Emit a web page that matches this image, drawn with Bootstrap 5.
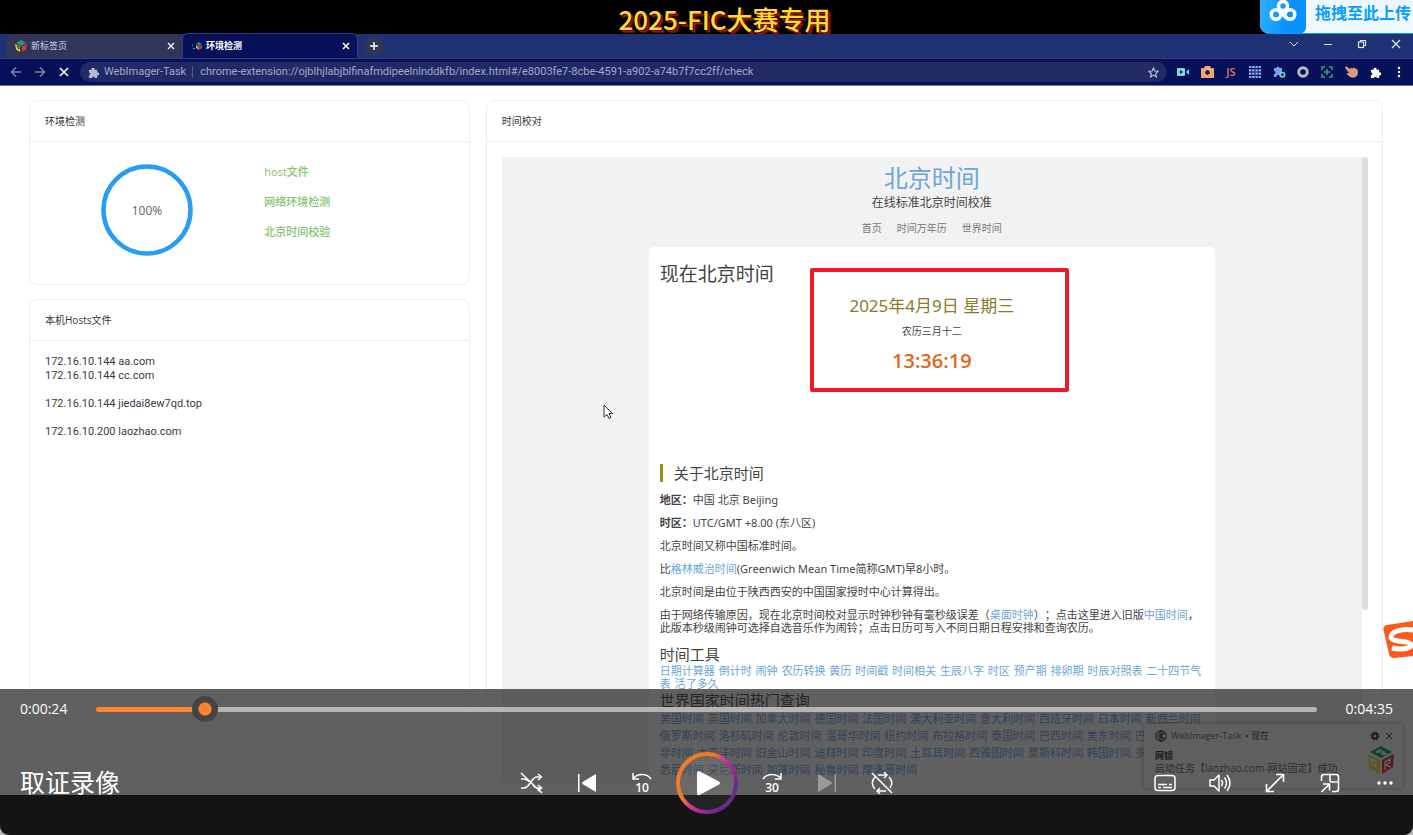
<!DOCTYPE html>
<html lang="zh-CN">
<head>
<meta charset="utf-8">
<meta name="viewport" content="width=device-width, initial-scale=1">
<title>取证录像</title>
<link href="https://cdn.jsdelivr.net/npm/bootstrap@5.3.0/dist/css/bootstrap.min.css" rel="stylesheet">
<style>
body{background:#b5b5b5;font-family:"Open Sans","Noto Sans CJK SC",sans-serif;font-size:11px;line-height:14px;color:#333}
a{text-decoration:none}
button{border:0;background:none;padding:0;color:inherit}
svg{display:block;flex:none}
h1,h2,h3,p,ul{margin:0}
.player{min-height:100vh;background:#141414;border-radius:0 0 9px 9px}
.caption-bar{height:34px;background:#000;padding-left:36px}
.caption-bar h1{font:500 26px/38px "Noto Sans CJK SC",sans-serif;color:#ffdc32;text-shadow:1px 1px 0 #5a0a00,2px 2px 0 #a01408,3px 3px 1px #6a0c04}
.upload{top:0;right:0;height:34px;background:#f0f8ff;border-bottom:1px solid #0a9bff;border-radius:0 0 0 9px;color:#06a0ff;font:700 16px/24px "Noto Sans CJK SC",sans-serif;z-index:3;overflow:hidden}
.upload span{padding:0 2px 0 9px}
.upload-logo{width:46px;height:34px;background:linear-gradient(100deg,#2fb0ff,#0792ff 60%);border-radius:0 0 7px 9px}
/* browser chrome */
.tabs{height:25px;background:#1d3173;padding-left:6px;border-bottom:1px solid #2c3f7c}
.tab{width:176px;height:24px;background:#313558;color:#d6d8e4;border-radius:6px 6px 0 0;font-size:9px;padding:0 7px 0 9px}
.tab.current{background:#07115a;color:#fff;font-weight:600;height:25px;border:1px solid #2c3f7c;border-bottom:0}
.plus{width:20px;height:20px;border-radius:50%;background:#313558;color:#fff;place-items:center;margin-left:6px}
.winctl{width:34px;height:20px;color:#dfe3f2}
.toolbar{height:27px;background:#07115a;border-bottom:1px solid #6d73a3;color:#fff;padding-right:2px}
.navbtn{width:24px;height:24px}
.address{height:20px;border-radius:10px;background:#222a66;color:#a3a8ca;font:11px/20px Roboto,sans-serif}
.address .host{border-right:1px solid #555c8c;line-height:12px;padding:0 6px 0 1px}
.address .url{padding-left:7px}
.ext{width:24px;height:24px}
.js{color:#f0706c;font:600 11px/14px "Open Sans",sans-serif}
/* page */
.page{background:#fff;margin-bottom:40px;padding:14px 30px 12px 29px}
.panel{border:1px solid #eee;border-radius:8px;background:#fff}
.panel.env{margin-bottom:14px}
.panel-head{height:41px;border-bottom:1px solid #eee;padding:0 15px;font:10px/41px "Open Sans","Noto Sans CJK SC",sans-serif;color:#333}
.checks{padding:15px 15px 28px}
.checks li{font-weight:500;color:#83c46c;line-height:30px;padding-left:15px}
.ring{margin-top:7px}
.hosts{padding:14px 15px;font:11px/14px Roboto,sans-serif;color:#3a3a44;margin:0;overflow:hidden}
.frame-wrap{padding:15px 14px 0 15px}
.frame{background:#f2f2f2;padding-top:4px}
.thumb{width:6px;height:453px;border-radius:3px;background:#ddd}
.site-title{font-size:24px;line-height:34px;color:#6aa5e0}
.site-sub{font-size:12px;line-height:15px;color:#444}
.site-nav{font-size:10px;line-height:16px;margin:10px 0 11px;gap:15px}
.site-nav a{color:#777}
.sheet{width:566px;max-width:100%;border-radius:5px 5px 0 0;background:#fff;padding:15px 11px 0;font-family:"Noto Sans","Noto Sans CJK SC",sans-serif;color:#444;text-spacing-trim:space-all}
.sheet h2{font-size:19px;line-height:24px;font-weight:400}
.date{font-size:17px;line-height:24px;margin-top:8px;color:#8a7a2c}
.lunar{font-size:10px;line-height:14px;margin-top:6px}
.clock{font:600 20px/26px "Open Sans",sans-serif;margin-top:10px;color:#e8661a}
.mark-box{left:161px;top:21px;width:259px;height:124px;border:4px solid #ee1b24;border-radius:2px}
.sheet h3{font-size:15px;font-weight:400;line-height:20px}
.sheet h3.about{margin:90px 0 11px;line-height:18px;border-left:3px solid #8f9413;padding-left:11px}
.sheet p{line-height:13px;margin-bottom:10px}
.sheet a{color:#6aa5dc}
.taglist{line-height:13px;white-space:nowrap}
.taglist.loose{line-height:17px}
.taglist a{margin-right:1px}
.pointer{left:603px;top:404px}
/* desktop toast */
.toast-box{right:10px;bottom:47px;width:259px;height:64px;background:#fbfbfb;box-shadow:0 0 4px #0005;font-size:9px;line-height:12px;padding:6px 9px 0 11px}
.toast-box .app{color:#666}
.toast-box .msg{color:#666;white-space:nowrap;font-size:10px}
.sogou{right:0;top:620px}
/* player controls */
.controls{left:0;right:0;bottom:0;background:rgba(20,20,20,.68);border-radius:0 0 9px 9px;padding:7px 0 21px;color:#fff}
.seek{height:26px;padding:0 20px;font-size:14px;gap:29px}
.seek input{appearance:none;-webkit-appearance:none;background:none;height:26px;margin:0;min-width:0}
.seek input::-webkit-slider-runnable-track{height:5px;border-radius:3px;background:linear-gradient(90deg,#ff8230 calc(8% + 11px),#b5b5b5 0)}
.seek input::-webkit-slider-thumb{-webkit-appearance:none;width:26px;height:26px;margin-top:-11px;border-radius:50%;background:radial-gradient(circle,#ff8230 6px,#444 7px)}
.deck{display:grid;grid-template-columns:1fr auto 1fr;height:62px;margin-top:30px;padding:0 7px}
.deck h2{font:400 25px/30px "Noto Sans CJK SC",sans-serif;padding:0 0 4px 13px}
.deck .group{gap:13px}
.ctl{width:42px;height:42px;display:grid;place-items:center}
.ctl.play{width:62px;height:62px;border-radius:50%}
svg text{font-family:"Open Sans",sans-serif;font-weight:600}
</style>
</head>
<body>
<div class="player position-relative d-flex flex-column overflow-hidden">
  <header class="caption-bar d-flex justify-content-center"><h1>2025-FIC大赛专用</h1></header>
  <div class="upload position-absolute d-flex">
    <div class="upload-logo d-flex justify-content-center">
      <svg width="28" height="22" viewBox="0 0 28 22" fill="none" stroke="#fff" stroke-width="3.500"><circle cx="14" cy="6" r="4.500"/><circle cx="7" cy="14.500" r="4.800"/><circle cx="21" cy="14.500" r="4.800"/><path d="M10.500 11l7 7"/></svg>
    </div>
    <span>拖拽至此上传</span>
  </div>

  <div class="tabs d-flex align-items-end">
    <div class="tab d-flex align-items-center gap-1">
      <svg width="12" height="12" viewBox="0 0 12 12"><path d="M1 3l5-3 5 3-5 3z" fill="#2a9a62"/><path d="M0 4l5 2.500v5.500L1 9.500z" fill="#d8cf3a"/><path d="M12 4L7 6.500V12l4-2.500z" fill="#cf3748"/><path d="M2 6l2 1v2z" stroke="#313558" fill="none"/></svg>
      <span class="me-auto">新标签页</span>
      <button aria-label="关闭"><svg width="8" height="8" viewBox="0 0 8 8" stroke="#fff" stroke-width="1.300"><path d="M1 1l6 6M7 1L1 7"/></svg></button>
    </div>
    <div class="tab current d-flex align-items-center gap-1">
      <svg width="10" height="9" viewBox="0 0 10 9"><path d="M4 2l3-2 3 2-3 2z" fill="#2a8a72"/><path d="M4 3l2.500 1.500V8L4 6z" fill="#c9b43a"/><path d="M10 3L7 4.500V8l3-2z" fill="#cf3748"/><path d="M0 3h1v1H0zM1 6h2v1H1z" fill="#4aa0e0"/></svg>
      <span class="me-auto">环境检测</span>
      <button aria-label="关闭"><svg width="8" height="8" viewBox="0 0 8 8" stroke="#fff" stroke-width="1.500"><path d="M1 1l6 6M7 1L1 7"/></svg></button>
    </div>
    <button class="plus d-grid align-self-center" aria-label="新建标签页"><svg width="10" height="10" viewBox="0 0 10 10" stroke="#fff" stroke-width="1.500"><path d="M5 1v8M1 5h8"/></svg></button>
    <div class="d-flex ms-auto align-self-start">
      <button class="winctl d-flex justify-content-center align-items-center" aria-label="标签搜索"><svg width="10" height="10" viewBox="0 0 10 10" fill="none" stroke="currentColor"><path d="M1 3l4 4 4-4"/></svg></button>
      <button class="winctl d-flex justify-content-center align-items-center" aria-label="最小化"><svg width="10" height="10" viewBox="0 0 10 10" stroke="currentColor"><path d="M1 5.500h8"/></svg></button>
      <button class="winctl d-flex justify-content-center align-items-center" aria-label="还原"><svg width="10" height="10" viewBox="0 0 10 10" fill="none" stroke="currentColor" stroke-width="1.200"><rect x="1.500" y="3" width="5" height="5.500"/><path d="M3.500 3V1.500h5v5h-2"/></svg></button>
      <button class="winctl d-flex justify-content-center align-items-center" aria-label="关闭窗口"><svg width="10" height="10" viewBox="0 0 10 10" stroke="currentColor" stroke-width="1.200"><path d="M1 1l8 8M9 1L1 9"/></svg></button>
    </div>
  </div>

  <div class="toolbar d-flex align-items-center ps-1">
    <button class="navbtn d-flex justify-content-center align-items-center" aria-label="后退"><svg width="12" height="12" viewBox="0 0 12 12" fill="none" stroke="#7d83ac" stroke-width="1.400"><path d="M11 6H1.500M6 1.500L1.500 6 6 10.500"/></svg></button>
    <button class="navbtn d-flex justify-content-center align-items-center" aria-label="前进"><svg width="12" height="12" viewBox="0 0 12 12" fill="none" stroke="#7d83ac" stroke-width="1.400"><path d="M1 6h9.500M6 1.500L10.500 6 6 10.500"/></svg></button>
    <button class="navbtn d-flex justify-content-center align-items-center" aria-label="停止"><svg width="10" height="10" viewBox="0 0 10 10" stroke="#fff" stroke-width="1.600"><path d="M1 1l8 8M9 1L1 9"/></svg></button>
    <div class="address d-flex align-items-center flex-fill ms-1 ps-2 pe-2">
      <svg class="me-1" width="11" height="11" viewBox="0 0 12 12" fill="#b5b9d2"><path d="M1 3h3a1.600 1.600 0 1 1 3 0h3v3a1.600 1.600 0 1 1 0 3v3H7.500a1.500 1.500 0 0 0-3 0H1V9a1.500 1.500 0 0 0 0-3z"/></svg>
      <span class="host">WebImager-Task</span>
      <span class="url me-auto">chrome-extension://ojblhjlabjblfinafmdipeelnlnddkfb/index.html#/e8003fe7-8cbe-4591-a902-a74b7f7cc2ff/check</span>
      <svg width="11" height="11" viewBox="0 0 12 12" fill="none" stroke="#c3c6da" stroke-width="1.200"><path d="M6 1l1.500 3.400 3.600.3-2.700 2.400.8 3.600L6 8.800 2.800 10.700l.8-3.600L.9 4.700l3.600-.3z"/></svg>
    </div>
    <div class="d-flex ps-1">
      <button class="ext d-flex justify-content-center align-items-center" aria-label="录屏"><svg width="12" height="8" viewBox="0 0 12 8"><rect width="8" height="8" rx="1" fill="#7fd8e0"/><path d="M3 2l3 2-3 2z" fill="#123"/><path d="M9 4l3-3v6z" fill="#7fd8e0"/></svg></button>
      <button class="ext d-flex justify-content-center align-items-center" aria-label="截图"><svg width="13" height="12" viewBox="0 0 13 12"><path d="M1 2h2l1-2h5l1 2h2q1 0 1 1v8q0 1-1 1H1q-1 0-1-1V3q0-1 1-1z" fill="#f2a76a"/><circle cx="6.500" cy="6.500" r="3" fill="#3a1a40" stroke="#fbd9b0" stroke-width="1"/></svg></button>
      <button class="ext js" aria-label="脚本">JS</button>
      <button class="ext d-flex justify-content-center align-items-center" aria-label="表格"><svg width="12" height="12" viewBox="0 0 12 12" stroke="#8eaaf0" stroke-width="2.200" stroke-dasharray="2.400 .800"><path d="M0 1h12M0 4.300h12M0 7.600h12M0 11h12"/></svg></button>
      <button class="ext d-flex justify-content-center align-items-center" aria-label="扩展"><svg width="13" height="12" viewBox="0 0 13 12"><path d="M1 2h2.500a1.500 1.500 0 1 1 3 0H9v8H6.500a1.500 1.500 0 0 0-3 1H1V8a1.500 1.500 0 0 0 0-3z" fill="#7c9cf0"/><circle cx="9.500" cy="8.800" r="2.200" fill="#123" stroke="#6fe0d0" stroke-width="1.500"/></svg></button>
      <button class="ext d-flex justify-content-center align-items-center" aria-label="圆环"><svg width="12" height="12" viewBox="0 0 12 12" fill="none" stroke="#b8b8be" stroke-width="3"><circle cx="6" cy="6" r="4.300"/></svg></button>
      <button class="ext d-flex justify-content-center align-items-center" aria-label="扫描"><svg width="12" height="12" viewBox="0 0 12 12" fill="none" stroke="#3aa07c" stroke-width="1.500"><path d="M1 4V1h3M8 1h3v3M11 8v3H8M4 11H1V8M6 3v6M3 6h6"/></svg></button>
      <button class="ext d-flex justify-content-center align-items-center" aria-label="抓手"><svg width="13" height="12" viewBox="0 0 13 12" fill="#d8967c"><path d="M1 0l4 3 1-1.500 1.500 1L9 1.500l1.500 1 2 1q1 4-.5 6.500-3 3-7 1L1 7.500l3-.5L0 2z"/></svg></button>
      <button class="ext d-flex justify-content-center align-items-center" aria-label="扩展程序"><svg width="11" height="11" viewBox="0 0 12 12" fill="#fff"><path d="M1 3h3a1.600 1.600 0 1 1 3 0h3v3a1.600 1.600 0 1 1 0 3v3H7.500a1.500 1.500 0 0 0-3 0H1V9a1.500 1.500 0 0 0 0-3z"/></svg></button>
      <button class="ext d-flex justify-content-center align-items-center" aria-label="菜单"><svg width="4" height="12" viewBox="0 0 4 12" fill="#fff"><circle cx="2" cy="2" r="1.200"/><circle cx="2" cy="6" r="1.200"/><circle cx="2" cy="10" r="1.200"/></svg></button>
    </div>
  </div>

  <main class="page flex-fill d-flex flex-column">
    <div class="row gx-3 flex-fill">
      <div class="col-4 d-flex flex-column">
        <section class="panel env">
          <div class="panel-head">环境检测</div>
          <div class="checks d-flex">
            <div class="w-50 d-flex justify-content-center">
              <svg class="ring" width="92" height="92" viewBox="0 0 92 92"><circle cx="46" cy="46" r="43.500" fill="none" stroke="#279cf3" stroke-width="4.500"/><text x="46" y="51" text-anchor="middle" font-size="12" style="font-weight:400" fill="#606266">100%</text></svg>
            </div>
            <ul class="w-50 list-unstyled"><li>host文件</li><li>网络环境检测</li><li>北京时间校验</li></ul>
          </div>
        </section>
        <section class="panel flex-fill">
          <div class="panel-head">本机Hosts文件</div>
<pre class="hosts">172.16.10.144 aa.com
172.16.10.144 cc.com

172.16.10.144 jiedai8ew7qd.top

172.16.10.200 laozhao.com</pre>
        </section>
      </div>
      <div class="col-8 d-flex">
        <section class="panel flex-fill d-flex flex-column">
          <div class="panel-head">时间校对</div>
          <div class="frame-wrap flex-fill d-flex">
            <div class="frame flex-fill d-flex flex-column align-items-center">
              <a href="#" class="site-title">北京时间</a>
              <div class="site-sub">在线标准北京时间校准</div>
              <nav class="site-nav d-flex"><a href="#">首页</a><a href="#">时间万年历</a><a href="#">世界时间</a></nav>
              <article class="sheet flex-fill position-relative">
                <h2>现在北京时间</h2>
                <div class="date text-center">2025年4月9日 星期三</div>
                <div class="lunar text-center">农历三月十二</div>
                <div class="clock text-center">13:36:19</div>
                <div class="mark-box position-absolute"></div>
                <h3 class="about">关于北京时间</h3>
                <p><b>地区：</b>中国 北京 Beijing</p>
                <p><b>时区：</b>UTC/GMT +8.00 (东八区)</p>
                <p>北京时间又称中国标准时间。</p>
                <p>比<a href="#">格林威治时间</a>(Greenwich Mean Time简称GMT)早8小时。</p>
                <p>北京时间是由位于陕西西安的中国国家授时中心计算得出。</p>
                <p>由于网络传输原因，现在北京时间校对显示时钟秒钟有毫秒级误差（<a href="#">桌面时钟</a>）；点击这里进入旧版<a href="#">中国时间</a>，<br>此版本秒级闹钟可选择自选音乐作为闹铃；点击日历可写入不同日期日程安排和查询农历。</p>
                <h3>时间工具</h3>
                <div class="taglist"><a href="#">日期计算器</a> <a href="#">倒计时</a> <a href="#">闹钟</a> <a href="#">农历转换</a> <a href="#">黄历</a> <a href="#">时间戳</a> <a href="#">时间相关</a> <a href="#">生辰八字</a> <a href="#">时区</a> <a href="#">预产期</a> <a href="#">排卵期</a> <a href="#">时辰对照表</a> <a href="#">二十四节气<br>表</a> <a href="#">活了多久</a></div>
                <h3>世界国家时间热门查询</h3>
                <div class="taglist loose"><a href="#">美国时间</a> <a href="#">英国时间</a> <a href="#">加拿大时间</a> <a href="#">德国时间</a> <a href="#">法国时间</a> <a href="#">澳大利亚时间</a> <a href="#">意大利时间</a> <a href="#">西班牙时间</a> <a href="#">日本时间</a> <a href="#">新西兰时间</a><br><a href="#">俄罗斯时间</a> <a href="#">洛杉矶时间</a> <a href="#">伦敦时间</a> <a href="#">温哥华时间</a> <a href="#">纽约时间</a> <a href="#">布拉格时间</a> <a href="#">泰国时间</a> <a href="#">巴西时间</a> <a href="#">美东时间</a> <a href="#">巴</a><br><a href="#">非时间</a> <a href="#">太平洋时间</a> <a href="#">旧金山时间</a> <a href="#">迪拜时间</a> <a href="#">印度时间</a> <a href="#">土耳其时间</a> <a href="#">西雅图时间</a> <a href="#">莫斯科时间</a> <a href="#">韩国时间</a> <a href="#">多</a><br><a href="#">悉尼时间</a> <a href="#">突尼斯时间</a> <a href="#">加蓬时间</a> <a href="#">秘鲁时间</a> <a href="#">摩洛哥时间</a></div>
              </article>
            </div>
            <div class="thumb"></div>
          </div>
        </section>
      </div>
    </div>
  </main>

  <svg class="pointer position-absolute" width="10" height="16" viewBox="0 0 10 16"><path d="M1 1v12l3-2.500 2 4 2-1-2-4h3.500z" fill="#fff" stroke="#333"/></svg>
  <svg class="sogou position-absolute" width="30" height="40" viewBox="0 0 30 40"><path d="M30 1L4 5Q-1 6 1 12l5 22q1 4 5 4l19-2z" fill="#fb5a1c"/><path d="M31 10C18 8 8 12 8 17c0 6 20 3 20 8 0 4-12 5-19 3" fill="none" stroke="#fff" stroke-width="5"/></svg>

  <aside class="toast-box position-absolute">
    <div class="d-flex align-items-center">
      <svg class="me-1" width="12" height="12" viewBox="0 0 12 12" fill="none" stroke="#333" stroke-width="1"><circle cx="6" cy="6" r="5.300"/><path d="M1 4l10 5M1 8l10-5M6 0v12M3 1l6 10M9 1L3 11"/></svg>
      <span class="app">WebImager-Task</span><span class="ms-1">• 现在</span>
      <svg class="ms-auto" width="24" height="10" viewBox="0 0 24 10" fill="none" stroke="#222"><circle cx="5" cy="5" r="2.500" stroke-width="2"/><circle cx="5" cy="5" r="4" stroke-dasharray="1.600 1.540"/><path d="M16 2l6 6M22 2l-6 6"/></svg>
    </div>
    <div class="d-flex justify-content-between">
      <div class="pt-1"><div class="fw-bold mt-1">网镜</div><div class="msg">启动任务【laozhao.com-网站固定】成功</div></div>
      <svg class="mt-1" width="26" height="28" viewBox="0 0 26 28"><path d="M2 6l11-6 11 6-11 6z" fill="#00a650"/><path d="M0 8l12 6v14L1 21z" fill="#f0dd1c"/><path d="M26 8l-12 6v14l11-7z" fill="#ee2030"/><path d="M8 6h4V4zM14 8h4l-4-3zM3 13l5 3v5l-5-3zM17 24v-8l5-3v3l-4 3 5 2" fill="none" stroke="#fff" stroke-width="1.500"/></svg>
    </div>
  </aside>

  <footer class="controls position-absolute">
    <div class="seek d-flex align-items-center">
      <span>0:00:24</span>
      <input class="flex-fill" type="range" min="0" max="275" value="22" aria-label="播放进度">
      <span>0:04:35</span>
    </div>
    <div class="deck align-items-center">
      <h2>取证录像</h2>
      <div class="group d-flex align-items-center">
        <button class="ctl" aria-label="随机播放"><svg width="24" height="22" viewBox="0 0 24 22" fill="none" stroke="#fff" stroke-width="1.500"><path d="M1 1l21 20M1 16h3c6 0 7-11 13-11h4M1 7h2c3 0 5 1 6 3M13 13c1 2 3 3 5 3h3M18 2l3.500 3L18 8M18 13l3.500 3-3.500 3"/></svg></button>
        <button class="ctl" aria-label="上一个"><svg width="20" height="20" viewBox="0 0 20 20" fill="#fff"><path d="M1 1h1.500v18H1zM18 1.500q1-.8 1 .5v16q0 1.300-1 .5L5.500 11q-1-1 0-2z"/></svg></button>
        <button class="ctl" aria-label="后退10秒"><svg width="22" height="30" viewBox="0 -4 22 30"><path d="M2 1v6h6M2 7c4-6 14-6 18 0" fill="none" stroke="#fff" stroke-width="1.500"/><text x="11" y="20" text-anchor="middle" font-size="12" fill="#fff">10</text></svg></button>
        <button class="ctl play" aria-label="播放"><svg width="62" height="62" viewBox="0 0 62 62"><defs><linearGradient id="rim" x1=".15" y1=".25" x2=".85" y2=".75"><stop offset=".3" stop-color="#f47a25"/><stop offset=".45" stop-color="#dd4480"/><stop offset=".65" stop-color="#b02b92"/><stop offset="1" stop-color="#6a2c8a"/></linearGradient></defs><circle cx="31" cy="31" r="29" fill="#fff1" stroke="url(#rim)" stroke-width="4"/><path d="M21 21q0-3 2.500-1.700L43 29.500q2 1.500 0 3L23.500 43Q21 44 21 41z" fill="#fff"/></svg></button>
        <button class="ctl" aria-label="前进30秒"><svg width="22" height="30" viewBox="0 -4 22 30"><path d="M20 1v6h-6M20 7C16 1 6 1 2 7" fill="none" stroke="#fff" stroke-width="1.500"/><text x="11" y="20" text-anchor="middle" font-size="12" fill="#fff">30</text></svg></button>
        <button class="ctl" aria-label="下一个" disabled><svg width="20" height="20" viewBox="0 0 20 20" fill="#999"><path d="M17.500 1H19v18h-1.500zM2 1.500Q1 .7 1 2v16q0 1.300 1 .5L14.500 11q1-1 0-2z"/></svg></button>
        <button class="ctl" aria-label="循环播放"><svg width="22" height="22" viewBox="0 0 22 22" fill="none" stroke="#fff" stroke-width="1.500"><path d="M1 1l20 20M7 3h9M13 0l3 3-3 3M15 19H6M9 16l-3 3 3 3M4 5C0 9 1 14 4 17M18 5c4 4 3 8 1 11"/></svg></button>
      </div>
      <div class="group d-flex align-items-center justify-content-end">
        <button class="ctl" aria-label="字幕"><svg width="22" height="18" viewBox="0 0 22 18" fill="none" stroke="#fff" stroke-width="1.500"><rect x="1" y="1.500" width="20" height="15" rx="3"/><path d="M4 10.500h9M15 10.500h3M4 13.500h3M9 13.500h9"/></svg></button>
        <button class="ctl" aria-label="音量"><svg width="22" height="20" viewBox="0 0 22 20" fill="none" stroke="#fff" stroke-width="1.500" stroke-linejoin="round"><path d="M1 7h4l5-5v16l-5-5H1zM12.500 7q2 3 0 6M15.500 4.500q4 5.500 0 11M18 2q6 8 0 16"/></svg></button>
        <button class="ctl" aria-label="全屏"><svg width="20" height="20" viewBox="0 0 20 20" fill="none" stroke="#fff" stroke-width="1.600"><path d="M2 18L18 2M11 1.500h7.500V9M1.500 11v7.500H9"/></svg></button>
        <button class="ctl" aria-label="小窗播放"><svg width="20" height="20" viewBox="0 0 20 20" fill="none" stroke="#fff" stroke-width="1.600"><path d="M1.500 8V4q0-2.500 2.500-2.500h12q2.500 0 2.500 2.500v12q0 2.500-2.500 2.500h-4M10 1.500V7q0 2 2 2h6.500M1.500 19L9 11.500M3 11h6.500v6.500"/></svg></button>
        <button class="ctl" aria-label="更多"><svg width="18" height="6" viewBox="0 0 18 6" fill="#fff"><circle cx="3" cy="3" r="1.700"/><circle cx="9" cy="3" r="1.700"/><circle cx="15" cy="3" r="1.700"/></svg></button>
      </div>
    </div>
  </footer>
</div>
<script src="https://cdn.jsdelivr.net/npm/bootstrap@5.3.0/dist/js/bootstrap.bundle.min.js"></script>
</body>
</html>
